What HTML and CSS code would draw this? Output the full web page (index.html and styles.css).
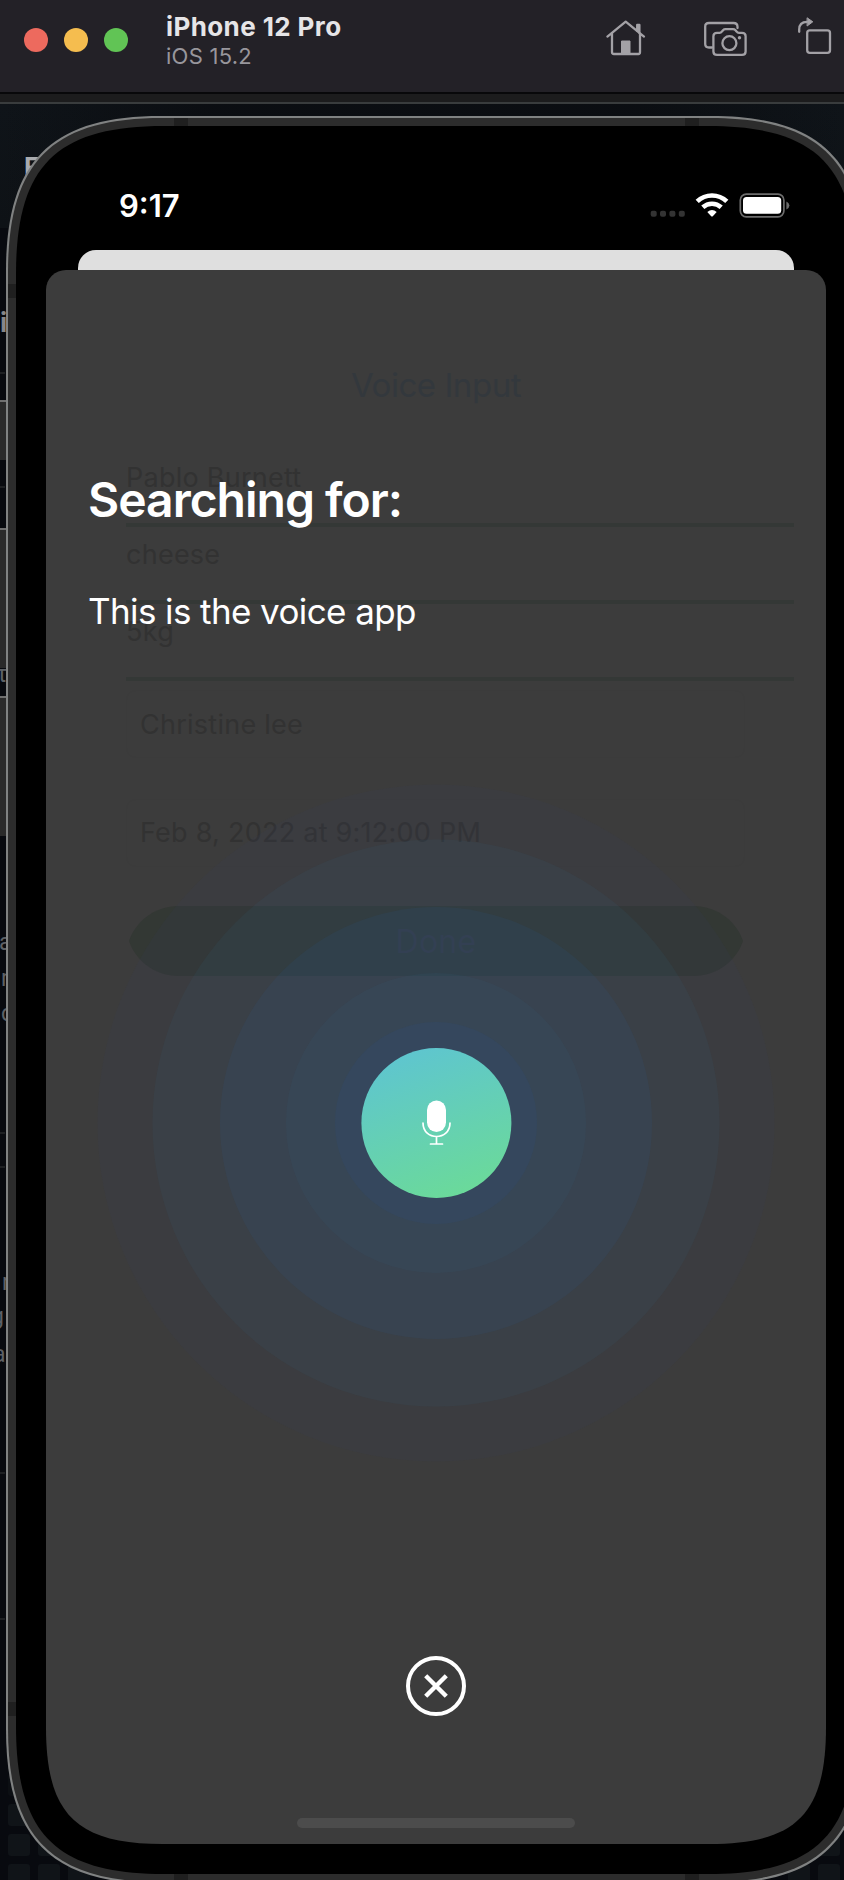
FILE: index.html
```html
<!DOCTYPE html>
<html lang="en">
<head>
<meta charset="utf-8">
<title>Simulator</title>
<link rel="stylesheet" href="styles.css">
</head>
<body>
<div class="window">
  <header class="toolbar">
    <div class="lights"><i class="light red"></i><i class="light yellow"></i><i class="light green"></i></div>
    <div class="titles">
      <div class="device-name">iPhone 12 Pro</div>
      <div class="os">iOS 15.2</div>
    </div>
    <svg class="tools" width="244" height="92" viewBox="600 0 244 92" fill="none" stroke="#a3a1a6" stroke-width="2.3" stroke-linecap="round" stroke-linejoin="round">
      <path d="M607.4 36.6 L625.7 21.6 L644 36.6 M612 33.5 V52 Q612 54 614 54 H638.5 Q640 54 640 52 V33.5"/>
      <path d="M637.2 31 V25 H639.4 V33"/>
      <path d="M621.5 54 V41 H630 V54 Z" fill="#a3a1a6" stroke-width="1"/>
      <path d="M712 47.5 H709 Q705.2 47.5 705.2 44 V26.5 Q705.2 23 709 23 H733.5 Q737.5 23 737.5 26.8 V28"/>
      <path d="M717 32.8 H719.5 Q721 32.8 722 31.4 L723 30.2 Q724 29.2 725.5 29.2 H733 Q734.5 29.2 735.5 30.2 L736.5 31.4 Q737.5 32.8 739 32.8 H742 Q745.6 32.8 745.6 36.3 V51.4 Q745.6 54.8 742 54.8 H717 Q713.4 54.8 713.4 51.4 V36.3 Q713.4 32.8 717 32.8 Z"/>
      <circle cx="729.4" cy="43.2" r="7"/>
      <circle cx="739.5" cy="37.7" r="1.7" fill="#a3a1a6" stroke="none"/>
      <rect x="807.2" y="30.4" width="22.8" height="22.4" rx="2.6"/>
      <path d="M799.2 31.8 V29.5 Q799.2 21.8 807 21.8"/>
      <path d="M807.4 18 L812.8 21.8 L807.4 25.8 Z" fill="#a3a1a6" stroke-width="1"/>
    </svg>
  </header>

  <main class="stage">
    <svg class="backdrop" width="844" height="1788" viewBox="0 92 844 1788">
      <defs>
        <linearGradient id="dusk" x1="0" y1="0" x2="0" y2="1">
          <stop offset="0" stop-color="#0f1419"/><stop offset="1" stop-color="#0e1216"/>
        </linearGradient>
        <linearGradient id="shade" x1="0" y1="0" x2="1" y2="0">
          <stop offset="0" stop-color="#0a0c10" stop-opacity="0"/><stop offset=".25" stop-color="#0a0c10" stop-opacity=".8"/>
          <stop offset=".75" stop-color="#0a0c10" stop-opacity=".8"/><stop offset="1" stop-color="#0a0c10" stop-opacity="0"/>
        </linearGradient>
      </defs>
      <rect y="92" width="844" height="1788" fill="#080a0f"/>
      <rect y="104" width="844" height="124" fill="url(#dusk)"/>
      <rect y="104" width="844" height="124" fill="url(#shade)"/>
      <rect y="92" width="844" height="2" fill="#08080a"/>
      <rect y="94" width="844" height="8" fill="#1c1c1d"/>
      <rect y="102" width="844" height="2" fill="#393c3d"/>
      <g fill="#1d1f22">
        <rect y="372" width="5" height="2"/><rect y="486" width="5" height="2"/>
        <rect y="1132" width="5" height="2"/><rect y="1166" width="5" height="2"/>
        <rect y="1472" width="5" height="2"/><rect y="1618" width="5" height="2"/>
      </g>
      <g fill="#2a2a2a">
        <rect y="402" width="6" height="58"/><rect y="530" width="6" height="138"/><rect y="698" width="6" height="138"/>
      </g>
      <g fill="#6f6f6f">
        <rect y="400" width="6" height="2"/><rect y="528" width="6" height="2"/><rect y="696" width="6" height="2"/>
      </g>
      <g class="behind">
        <text x="24" y="177" class="behind-title">F</text>
        <text x="0" y="332" class="behind-title faded">i</text>
        <text x="-4" y="682">τ</text>
        <text x="-1" y="950">a</text>
        <text x="1" y="986">r</text>
        <text x="1" y="1021">c</text>
        <text x="2" y="1290">r</text>
        <text x="-9" y="1324">g</text>
        <text x="-7" y="1362">a</text>
      </g>
      <g fill="#101418">
        <rect x="8" y="1774" width="22" height="22" rx="3" opacity=".5"/>
        <rect x="8" y="1804" width="22" height="22" rx="3"/>
        <rect x="8" y="1834" width="22" height="22" rx="3"/><rect x="38" y="1834" width="22" height="22" rx="3"/>
        <rect x="8" y="1864" width="22" height="22" rx="3"/><rect x="38" y="1864" width="22" height="22" rx="3"/><rect x="68" y="1864" width="22" height="22" rx="3"/>
        <rect x="818" y="1834" width="22" height="22" rx="3"/>
        <rect x="788" y="1864" width="22" height="22" rx="3"/><rect x="818" y="1864" width="22" height="22" rx="3"/>
      </g>
      <!-- device body: rim, metal band, glass -->
      <path fill="#808282" d="M6 271 C6 161 51 116 161 116 H711 C821 116 866 161 866 271 V1729 C866 1839 821 1884 711 1884 H161 C51 1884 6 1839 6 1729 Z"/>
      <path fill="#2c2c2c" d="M8 272 C8 162 52 118 162 118 H710 C820 118 864 162 864 272 V1728 C864 1838 820 1882 710 1882 H162 C52 1882 8 1838 8 1728 Z"/>
      <g fill="#1f1f1f">
        <rect x="174" y="118" width="14" height="8"/><rect x="685" y="118" width="14" height="8"/>
        <rect x="8" y="284" width="8" height="14"/><rect x="8" y="1702" width="8" height="14"/>
        <rect x="174" y="1874" width="14" height="8"/><rect x="685" y="1874" width="14" height="8"/>
      </g>
      <path fill="#000" d="M16 274 C16 166 56 126 164 126 H708 C816 126 856 166 856 274 V1726 C856 1834 816 1874 708 1874 H164 C56 1874 16 1834 16 1726 Z"/>
    </svg>

    <section class="screen">
      <div class="status">
        <time class="clock">9:17</time>
        <svg width="142" height="30" viewBox="650 190 142 30">
          <g fill="#333"><rect x="650.7" y="210.7" width="6" height="6" rx="2"/><rect x="660" y="210.7" width="6" height="6" rx="2"/><rect x="669.4" y="210.7" width="6" height="6" rx="2"/><rect x="678.8" y="210.7" width="6" height="6" rx="2"/></g>
          <g fill="none" stroke="#fff" stroke-width="4.6">
            <path d="M697.2 201.4 A21.5 21.5 0 0 1 726.8 201.4"/>
            <path d="M702.8 207.3 A13.5 13.5 0 0 1 721.2 207.3"/>
          </g>
          <path fill="#fff" d="M707.3 212 Q712 208 716.7 212 L712.8 216.2 Q712 217 711.2 216.2 Z"/>
          <rect x="740.3" y="194.2" width="43.6" height="22.6" rx="6" fill="none" stroke="#6c6c6c" stroke-width="1.7"/>
          <rect x="743" y="197" width="38.2" height="16.8" rx="3.6" fill="#fff"/>
          <path d="M786.4 201.5 Q789.4 203 789.4 205.5 Q789.4 208 786.4 209.4 Z" fill="#6c6c6c"/>
        </svg>
      </div>
      <div class="card-behind"></div>
      <div class="sheet">
        <div class="layer form">
          <h2 class="form-title">Voice Input</h2>
          <div class="field">Pablo Burnett</div>
          <div class="field">cheese</div>
          <div class="field">5kg</div>
          <div class="box">Christine lee</div>
          <div class="box second">Feb 8, 2022 at 9:12:00 PM</div>
          <div class="done"><span>Done</span></div>
        </div>
        <div class="layer voice">
          <h1 class="heading">Searching for:</h1>
          <p class="heard">This is the voice app</p>
          <svg class="pulse" width="678" height="678" viewBox="-339 -339 678 678">
            <defs>
              <linearGradient id="mint" x1=".3" y1="0" x2=".66" y2="1">
                <stop offset="0" stop-color="#5ec5d0"/><stop offset="1" stop-color="#6bda99"/>
              </linearGradient>
            </defs>
            <circle r="338.5" fill="rgba(60,64,140,.055)"/>
            <circle r="283.5" fill="rgba(45,105,140,.1)"/>
            <circle r="216" fill="rgba(40,95,170,.1)"/>
            <circle r="150" fill="rgba(56,115,155,.08)"/>
            <circle r="101" fill="rgba(38,88,180,.09)"/>
            <circle cx=".4" r="75" fill="url(#mint)"/>
            <rect x="-9" y="-22.5" width="19" height="31.5" rx="9.5" fill="#fff"/>
            <path d="M-13 0 C-13 18 14 18 14 0 M.5 13.5 V21 M-5.5 21 H6.5" fill="none" stroke="#fff" stroke-width="1.7" stroke-linecap="round"/>
          </svg>
          <svg class="close" width="60" height="60" viewBox="0 0 60 60" fill="none" stroke="#fff">
            <circle cx="30" cy="30" r="28" stroke-width="4"/>
            <path d="M19.7 19.7 L40.3 40.3 M40.3 19.7 L19.7 40.3" stroke-width="4.4"/>
          </svg>
          <div class="home-bar"></div>
        </div>
      </div>
    </section>
  </main>
</div>
</body>
</html>
```

FILE: styles.css
```css
* { box-sizing: border-box; }
body { margin: 0; background: #080a0f; font-family: Inter, "Liberation Sans", sans-serif; }
h1, h2, p { margin: 0; font-weight: 400; }

.window { width: 844px; height: 1880px; overflow: hidden; }

.toolbar { display: flex; height: 92px; background: #232127; }
.lights { display: flex; gap: 16px; padding: 28px 0 0 24px; width: 165px; }
.light { width: 24px; height: 24px; border-radius: 50%; }
.red { background: #ed6a5e; }
.yellow { background: #f5bd4f; }
.green { background: #61c455; }
.titles { width: 435px; padding: 11px 0 0 1px; white-space: nowrap; }
.device-name { font-size: 26px; line-height: 32px; font-weight: 700; letter-spacing: .4px; color: #e6e5e7; }
.os { font-size: 22px; line-height: 27px; letter-spacing: .25px; color: #98969c; }

.stage { display: grid; width: 844px; height: 1788px; }
.backdrop, .screen { grid-area: 1 / 1; }
.behind { font-family: Roboto, sans-serif; font-size: 23px; fill: #5d6166; }
.behind-title { font-size: 27px; font-weight: 700; fill: #a9abae; }
.faded { fill: #85878a; }

.screen { width: 780px; height: 1752px; margin-left: 46px; display: flex; flex-direction: column; align-items: center;
  clip-path: path("M0 0 H780 V1635 C780 1722 750 1752 663 1752 H117 C30 1752 0 1722 0 1635 Z"); }
.status { display: flex; justify-content: space-between; width: 780px; height: 158px; padding: 98px 34px 0 73px; flex: none; }
.clock { font-size: 31px; line-height: 31px; font-weight: 600; color: #fff; }
.card-behind { flex: none; width: 716px; height: 20px; border-radius: 18px 18px 0 0; background: #dfdfdf; }
.sheet { display: grid; flex: none; width: 780px; height: 1574px; border-radius: 20px 20px 0 0; background: #3c3c3c; }
.layer { grid-area: 1 / 1; display: flex; flex-direction: column; white-space: nowrap; }

.form { z-index: 0; padding: 95px 32px 0 80px; color: #323232; font-size: 27px; line-height: 32px; letter-spacing: .25px; }
.form-title { margin: 0 48px 45px 0; text-align: center; font-size: 33px; line-height: 40px; letter-spacing: -.45px; color: #33383d; }
.field { height: 77px; padding-top: 12px; border-bottom: 4px solid #343836; }
.box { width: 619px; height: 68px; margin-top: 9px; padding: 18px 13px 0; border: 1px solid #3b3b3b; border-radius: 10px; }
.second { margin-top: 41px; padding-top: 17px; }
.done { width: 614px; height: 70px; margin: 39px 0 0 3px; padding-top: 18px; background: #333834; text-align: center;
  font-size: 32px; line-height: 36px; color: #36383f;
  clip-path: path("M0 35 C6 17 24 0 50 0 H564 C590 0 608 17 614 35 C608 53 590 70 564 70 H50 C24 70 6 53 0 35 Z"); }

.voice { z-index: 1; align-items: center; color: #fff; }
.heading, .heard { align-self: flex-start; padding-left: 42px; }
.heading { margin-top: 201px; font-size: 48px; line-height: 58px; font-weight: 600; letter-spacing: -1px; }
.heard { margin-top: 60px; font-size: 35px; line-height: 44px; letter-spacing: -.6px; }
.pulse { margin-top: 151px; flex: none; }
.close { margin-top: 194px; flex: none; }
.home-bar { width: 278px; height: 10px; margin-top: 102px; border-radius: 5px; background: #4c4c4c; }
```
